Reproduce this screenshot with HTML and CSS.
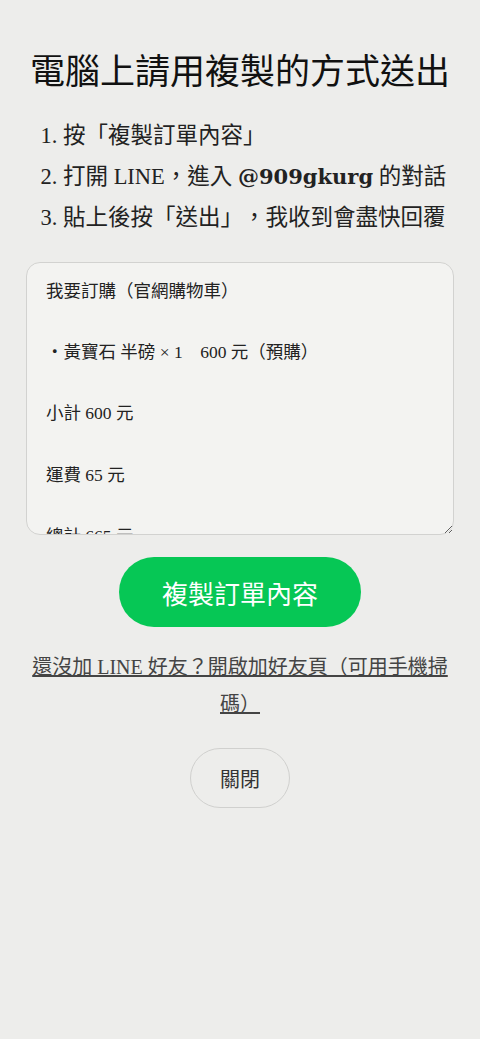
FILE: index.html
```html
<!DOCTYPE html>
<html lang="zh-Hant">
<head>
    <meta charset="UTF-8">
    <meta name="viewport" content="width=device-width, initial-scale=1.0">
    <title>電腦上請用複製的方式送出</title>
    <link rel="stylesheet" href="styles.css">
</head>
<body>
    <div class="panel">
        <h1 class="titulo">電腦上請用複製的方式送出</h1>

        <ol class="pasos">
            <li>按「複製訂單內容」</li>
            <li>打開 LINE，進入 <b>@909gkurg</b> 的對話</li>
            <li>貼上後按「送出」，我收到會盡快回覆</li>
        </ol>

        <textarea id="pedido" class="pedido" readonly>我要訂購（官網購物車）

・黃寶石 半磅 × 1　600 元（預購）

小計 600 元

運費 65 元

總計 665 元</textarea>

        <button class="btn-copiar" onclick="copiarPedido()">複製訂單內容</button>

        <p class="enlace"><a href="#">還沒加 LINE 好友？開啟加好友頁（可用手機掃碼）</a></p>

        <button class="btn-cerrar">關閉</button>
    </div>

    <script>
        // copiar el texto del pedido
        function copiarPedido() {
            const area = document.getElementById('pedido');
            area.select();
            document.execCommand('copy');
        }
    </script>
</body>
</html>
```

FILE: styles.css
```css
body {
    margin: 0;
    background-color: #ededeb;
    color: #222;
    font-family: "Liberation Serif", "Noto Sans CJK TC", serif;
    text-spacing-trim: space-all;
}
.panel {
    padding: 0 26px;
    text-align: center;
}
.titulo {
    font-size: 35px;
    font-weight: normal;
    color: #111;
    margin: 0;
    padding-top: 50px;
    line-height: 46px;
}
.pasos {
    text-align: left;
    font-size: 22.5px;
    line-height: 41px;
    margin: 19px 0 0;
    padding-left: 37px;
    color: #222;
}
.pasos b {
    font-family: "DejaVu Serif", serif;
    font-weight: bold;
    font-size: 21px;
}
.pedido {
    display: block;
    box-sizing: border-box;
    width: 100%;
    height: 273px;
    margin-top: 24px;
    padding: 13px 19px;
    border: 1px solid #d2d2d0;
    border-radius: 14px;
    background-color: #f3f3f1;
    color: #222;
    font-family: "Liberation Serif", "Noto Sans CJK TC", serif;
    font-size: 17.5px;
    line-height: 30.6px;
    text-spacing-trim: space-all;
    overflow: hidden;
    outline: none;
}
.btn-copiar {
    display: block;
    margin: 22px auto 0;
    width: 242px;
    height: 70px;
    border: none;
    border-radius: 35px;
    background-color: #06c755;
    color: #fff;
    font-family: "Liberation Serif", "Noto Sans CJK TC", serif;
    font-size: 26px;
    cursor: pointer;
}
.enlace {
    margin: 22px 0 0;
    font-size: 20px;
    line-height: 37px;
}
.enlace a {
    color: #444;
}
.btn-cerrar {
    display: block;
    margin: 25px auto 0;
    width: 100px;
    height: 60px;
    border: 1px solid #d0d0ce;
    border-radius: 30px;
    background: transparent;
    color: #333;
    font-family: "Noto Sans CJK TC", sans-serif;
    font-size: 20px;
    cursor: pointer;
}
```
